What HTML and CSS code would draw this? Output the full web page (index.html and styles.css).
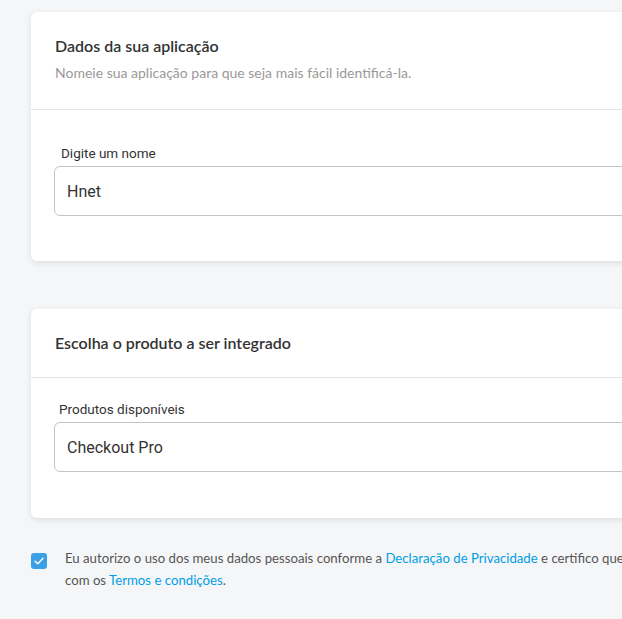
FILE: index.html
```html
<!DOCTYPE html>
<html lang="pt-BR">
<head>
  <meta charset="UTF-8" />
  <title>Criar aplicação</title>
  <link rel="stylesheet" href="styles.css">
</head>
<body>

<div class="page">

  <div class="card">
    <div class="card-header">
      <div class="card-title">Dados da sua aplicação</div>
      <div class="card-subtitle">Nomeie sua aplicação para que seja mais fácil identificá-la.</div>
    </div>
    <div class="card-body">
      <label class="field-label" for="app-name">Digite um nome</label>
      <div class="field">
        <input class="field-input" id="app-name" type="text" value="Hnet">
      </div>
    </div>
  </div>

  <div class="card">
    <div class="card-header short">
      <div class="card-title">Escolha o produto a ser integrado</div>
    </div>
    <div class="card-body tight">
      <label class="field-label alt" for="product">Produtos disponíveis</label>
      <div class="field">
        <div class="field-input" id="product">Checkout Pro</div>
      </div>
    </div>
  </div>

  <div class="terms">
    <span class="checkbox">
      <svg width="10" height="8" viewBox="0 0 10 8"><path d="M1 4.2 L3.8 6.8 L9 1.2" fill="none" stroke="#fff" stroke-width="1.4" stroke-linecap="round" stroke-linejoin="round"/></svg>
    </span>
    <p class="terms-text">Eu autorizo o uso dos meus dados pessoais conforme a <a href="#">Declaração de Privacidade</a> e certifico que estou de acordo com os <a href="#">Termos e condições</a>.</p>
  </div>

</div>

</body>
</html>
```

FILE: styles.css
```css
* {
  box-sizing: border-box;
}

html, body {
  margin: 0;
  padding: 0;
  background: #f5f6f8;
  font-family: 'Lato', 'Open Sans', sans-serif;
  color: #333;
  overflow: hidden;
}

.page {
  width: 780px;
  padding: 12px 0 0 31px;
  display: flex;
  flex-direction: column;
}

.card {
  background: #fff;
  border-radius: 6px;
  box-shadow: 0 2px 6px rgba(0, 0, 0, 0.1);
}

.card + .card {
  margin-top: 48px;
}

.card-header {
  height: 98px;
  padding: 24px 24px 0 24px;
  border-bottom: 1px solid #e4e4e4;
}

.card-header.short {
  height: 69px;
}

.card-title {
  font-size: 16px;
  font-weight: 600;
  color: #333;
  line-height: 20px;
}

.card-subtitle {
  margin-top: 8px;
  font-size: 14px;
  color: #999;
  line-height: 18px;
}

.card-body {
  padding: 35px 24px 45px 23px;
}

.card-body.tight {
  padding-top: 23px;
  padding-bottom: 46px;
}

.field-label {
  display: block;
  padding-left: 7px;
  margin-bottom: 5px;
  font-family: 'Roboto', sans-serif;
  font-size: 13.5px;
  color: #333;
  line-height: 16px;
}

.field-label.alt {
  padding-left: 5px;
}

.field-input {
  display: flex;
  align-items: center;
  width: 100%;
  height: 50px;
  padding: 0 12px;
  border: 1px solid #c4c4c4;
  border-radius: 6px;
  font-family: 'Roboto', sans-serif;
  font-size: 16px;
  color: #333;
  background: #fff;
  outline: none;
}

.terms {
  display: flex;
  align-items: flex-start;
  gap: 18px;
  margin-top: 29px;
}

.checkbox {
  flex: none;
  width: 16px;
  height: 16px;
  margin-top: 6px;
  border-radius: 3px;
  background: #3b9fe7;
  display: flex;
  align-items: center;
  justify-content: center;
}

.terms-text {
  margin: 0;
  width: 665px;
  font-size: 13.2px;
  line-height: 22px;
  color: #555;
}

.terms-text a {
  color: #009ee3;
  text-decoration: none;
}
```
